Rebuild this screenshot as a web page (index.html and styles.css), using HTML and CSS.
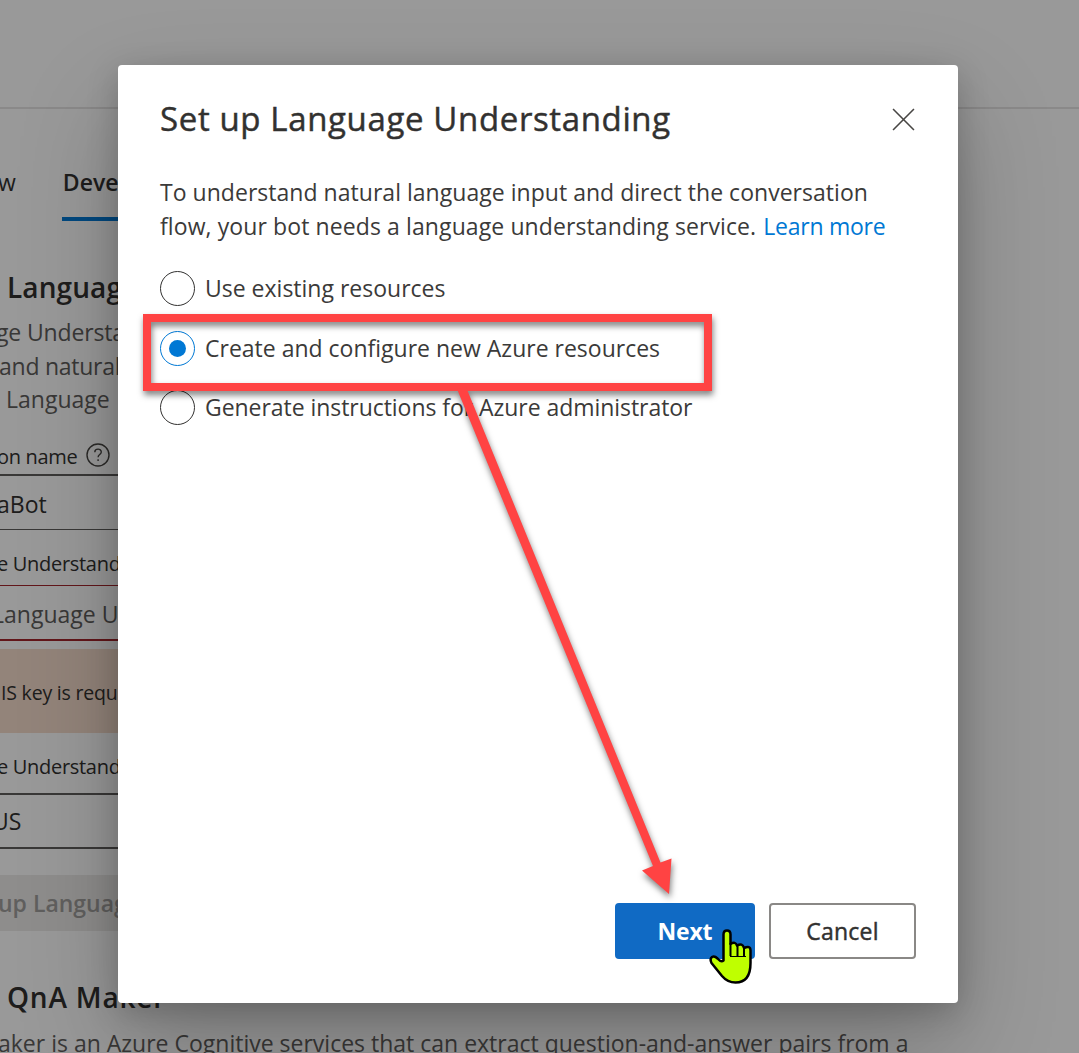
FILE: index.html
```html
<!DOCTYPE html>
<html lang="en"><head><meta charset="utf-8"><title>Set up Language Understanding</title><link rel="stylesheet" href="styles.css"></head>
<body>
<main class="page">
  <header class="top-bar"></header>
  <nav class="tabs"><span class="tab">w</span><span class="tab active">Develop</span></nav>
  <section class="panel">
    <h2 class="section-title">Language</h2>
    <p class="copy"><span class="copy-first">ge Understand</span><br><span class="copy-second">and natural</span><br><span class="copy-third">Language</span></p>
    <div class="label app-name">on name
      <svg class="help" viewBox="0 0 24 24"><circle cx="12" cy="12" r="11"/><path d="M8.800 9.200c0-4 6.500-4 6.500-.2 0 2.500-3.200 2.600-3.200 5.200"/><path d="M12.100 16.300v1.800"/></svg>
    </div>
    <div class="field bot">aBot</div>
    <div class="label authoring">e Understanding</div>
    <div class="field key">Language U</div>
    <div class="notice">UIS key is required</div>
    <div class="label region">e Understanding</div>
    <div class="field us">US</div>
    <div class="disabled-button">up Language</div>
  </section>
  <section class="qna">
    <h2 class="section-title qna-title">QnA Maker</h2>
    <p class="qna-copy">aker is an Azure Cognitive services that can extract question-and-answer pairs from a</p>
  </section>
</main>
<div class="overlay"></div>
<section class="dialog" role="dialog">
  <header class="dialog-head">
    <h1 class="dialog-title">Set up Language Understanding</h1>
    <svg class="close" viewBox="0 0 22 22"><path d="M1 1l20 20M21 1L1 21"/></svg>
  </header>
  <p class="intro">To understand natural language input and direct the conversation<br><span class="intro-end">flow, your bot needs a language understanding service. <a class="link">Learn more</a></span></p>
  <div class="options">
    <label class="option"><span class="radio"></span><span>Use existing resources</span></label>
    <label class="option"><span class="radio checked"></span><span>Create and configure new Azure resources</span></label>
    <label class="option"><span class="radio"></span><span class="admin">Generate instructions for Azure administrator</span></label>
  </div>
  <footer class="actions"><button class="button primary">Next</button><button class="button">Cancel</button></footer>
</section>
<svg class="annotation" viewBox="0 0 1079 1053">
  <g class="mark">
    <path class="frame" d="M147 318H708V387H147Z"/>
    <path class="arrow" d="M457 389L466 387L660.500 862.500L671.500 858.500L669 894L642 870.500L653 866Z"/>
  </g>
  <path class="hand" d="M723.500 960.500V934.500Q723.500 930.500 727 930.500Q730.500 930.500 730.500 934.500V944Q735.500 941 737 945.500Q742.500 942.500 744 948Q750.500 945 750.500 950.500V963Q750.500 982.500 735.500 982.500Q727.500 982.500 722 976L711.500 963Q709.500 959 712 957Q714.500 955.500 717.500 958.500Q721 962.500 723.500 960.500Z"/>
  <path class="fingers" d="M730.500 943V956M737.500 945V956M744 947V956"/>
  <path class="palm" d="M730 956.500H746"/>
</svg>
</body></html>
```
FILE: styles.css
```css
* { box-sizing: border-box; }
body { margin: 0; width: 1079px; height: 1053px; overflow: hidden; position: relative; background: #fff; color: #323130; font: 23px/33px "Open Sans", "Noto Sans", sans-serif; }
h1, h2, p { margin: 0; font-weight: 400; }
.page { height: 1053px; overflow: hidden; white-space: nowrap; }
.top-bar { height: 109px; border-bottom: 2px solid #e6e5e4; }
.tabs { height: 112px; padding-top: 46px; display: flex; gap: 46px; margin-left: -2px; }
.tab { height: 66px; line-height: 54px; }
.tab.active { padding-left: 1px; font-weight: 600; border-bottom: 4px solid #0078d4; width: 120px; }
.panel { width: 700px; height: 749px; padding-top: 49px; }
.section-title { padding-left: 7px; font-size: 28px; font-weight: 600; line-height: 34px; letter-spacing: .1px; }
.copy { margin-top: 12px; line-height: 33.500px; color: #605e5c; }
.copy-first { margin-left: -4px; letter-spacing: -.15px; }
.copy-second { margin-left: -1px; letter-spacing: -.25px; }
.copy-third { margin-left: 6px; }
.label { font-size: 20px; height: 34px; line-height: 34px; display: flex; gap: 9px; margin-left: -3px; letter-spacing: -.3px; }
.app-name { margin-top: 22px; height: 35px; line-height: 36px; gap: 8px; }
.help { width: 24px; height: 24px; margin-top: 4px; fill: none; stroke: #484644; stroke-width: 1.400; }
.field { line-height: 56px; border: solid #605e5c; border-width: 2px 0 1px; height: 56px; text-indent: -3px; }
.authoring { margin-top: 17px; height: 38px; }
.key { border-color: #a4262c; color: #605e5c; border-width: 1px 0 2px; text-indent: -8px; }
.notice { height: 84px; margin-top: 8px; background: #f5dccb; line-height: 88px; font-size: 19.500px; letter-spacing: -.2px; text-indent: -13px; }
.region { margin-top: 17px; height: 43px; }
.us { border-width: 2px 0; line-height: 52px; text-indent: -8px; }
.disabled-button { margin-top: 26px; height: 56px; line-height: 56px; background: #edebe9; font-weight: 600; color: #a19f9d; text-indent: -2px; }
.qna { padding-top: 10px; }
.qna-title { letter-spacing: .8px; }
.qna-copy { margin-top: 13px; margin-left: -2px; color: #605e5c; }
.overlay { position: absolute; inset: 0; background: rgba(0,0,0,.4); }
.dialog { position: absolute; left: 118px; top: 65px; width: 840px; height: 938px; padding: 36px 42px 44px; display: flex; flex-direction: column; background: #fff; border-radius: 4px; box-shadow: 0 45px 101px rgba(0,0,0,.22), 0 8px 32px rgba(0,0,0,.2); }
.dialog-head { display: flex; justify-content: space-between; }
.dialog-title { font-size: 33px; line-height: 36px; letter-spacing: .63px; -webkit-text-stroke: .45px currentColor; }
.close { width: 23px; height: 23px; margin: 7px 1px 0 0; fill: none; stroke: #484644; stroke-width: 1.500; }
.intro { margin-top: 39px; line-height: 33.500px; white-space: nowrap; letter-spacing: .03px; color: #3b3a39; }
.intro-end { letter-spacing: .1px; }
.link { color: #0078d4; margin-left: 1px; letter-spacing: -.25px; }
.options { margin-top: 28px; display: flex; flex-direction: column; gap: 24.500px; color: #3b3a39; }
.option { display: flex; gap: 10px; align-items: center; height: 35px; line-height: 37px; }
.admin { letter-spacing: -.05px; }
.radio { width: 35px; height: 35px; border: 1.500px solid #323130; border-radius: 50%; display: grid; place-items: center; }
.radio.checked { border-color: #0078d4; }
.radio.checked::after { content: ""; width: 17px; height: 17px; border-radius: 50%; background: #0078d4; }
.actions { margin-top: auto; display: flex; justify-content: flex-end; gap: 14px; }
.button { width: 147px; height: 56px; padding: 0; border: 2px solid #8a8886; border-radius: 4px; background: #fff; font: 400 23px/33px "Open Sans", sans-serif; letter-spacing: .25px; -webkit-text-stroke: .45px currentColor; color: #323130; }
.primary { width: 140px; background: #106ac4; border-color: #106ac4; color: #fff; font-weight: 700; letter-spacing: -.2px; -webkit-text-stroke: 0; }
.annotation { position: absolute; inset: 0; width: 1079px; height: 1053px; }
.mark { filter: drop-shadow(1px 4px 3px rgba(0,0,0,.5)); }
.frame { fill: none; stroke: #ff4343; stroke-width: 8; stroke-linejoin: miter; }
.arrow { fill: #ff4343; }
.hand { fill: #bfff00; stroke: #000; stroke-width: 2.500; stroke-linejoin: round; }
.fingers { fill: none; stroke: #000; stroke-width: 2; }
.palm { fill: none; stroke: #000; stroke-width: 1; }
```
